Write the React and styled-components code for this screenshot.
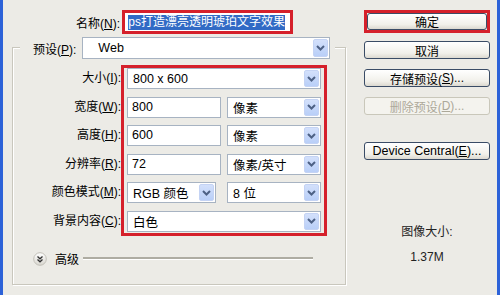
import styled, { createGlobalStyle } from "styled-components";

const GlobalStyle = createGlobalStyle`
  html, body {
    margin: 0;
    padding: 0;
  }
  body {
    width: 500px;
    height: 295px;
    overflow: hidden;
    font-family: "Liberation Sans", "Noto Sans CJK SC", sans-serif;
    font-size: 12px;
    color: #000;
  }
`;

const Window = styled.div`
  box-sizing: border-box;
  width: 500px;
  height: 295px;
  display: flex;
  padding-top: 10px;
  background: #ecebe6;
  border-left: 3px solid #2d62d8;
  border-right: 3px solid #2d62d8;
`;

const LeftPane = styled.div`
  width: 360px;
  display: flex;
  flex-direction: column;
`;

const RightPane = styled.div`
  width: 126px;
  margin-left: 1px;
  display: flex;
  flex-direction: column;
  align-items: stretch;
  gap: 10px;
`;

const Label = styled.div`
  width: ${(p) => p.$width || "auto"};
  height: ${(p) => p.$height || "auto"};
  line-height: ${(p) => p.$height || "normal"};
  text-align: ${(p) => p.$align || "left"};
  white-space: nowrap;
  flex-shrink: 0;
  u {
    text-decoration: underline;
  }
`;

const NameRow = styled.div`
  display: flex;
  align-items: center;
  height: 24px;
`;

const RedFrame = styled.div`
  box-sizing: border-box;
  border: 3px solid #d5202b;
  width: ${(p) => p.$width || "auto"};
  height: ${(p) => p.$height || "auto"};
  margin-left: ${(p) => p.$left || "0"};
  margin-bottom: ${(p) => p.$bottom || "0"};
  display: flex;
  align-items: stretch;
`;

const NameInput = styled.div`
  flex: 1;
  background: #fff;
  display: flex;
  justify-content: flex-end;
  align-items: center;
  overflow: hidden;
  padding-right: 5px;
`;

const Selected = styled.span`
  background: #316ac5;
  color: #fff;
  white-space: nowrap;
  line-height: 15px;
`;

const GroupBox = styled.div`
  box-sizing: border-box;
  margin: 13px 0 0 9px;
  width: 334px;
  height: 238px;
  border: 1px solid #c9c7bd;
  box-shadow: inset 1px 1px 0 #fff, 1px 1px 0 #fff;
  display: flex;
  flex-direction: column;
`;

const PresetRow = styled.div`
  display: flex;
  align-items: center;
  gap: 6px;
  margin: -11px 0 0 7px;
  width: 315px;
  height: 22px;
  padding: 0 4px 0 13px;
  box-sizing: border-box;
  background: #ecebe6;
`;

const Fields = styled.div`
  display: flex;
  margin-top: 6px;
`;

const LabelCol = styled.div`
  width: 108px;
  padding-top: 3px;
  display: flex;
  flex-direction: column;
  gap: 7.6px;
`;

const ControlCol = styled.div`
  box-sizing: border-box;
  width: 206px;
  border: 3px solid #d5202b;
  padding: 0 3px 1px;
  display: flex;
  flex-direction: column;
  gap: 7.6px;
`;

const ControlRow = styled.div`
  display: flex;
  gap: ${(p) => p.$gap || "6px"};
`;

const Input = styled.div`
  box-sizing: border-box;
  width: ${(p) => p.$width || "94px"};
  height: 21px;
  border: 1px solid #a7b3c2;
  background: #fff;
  padding-left: 4px;
  line-height: 19px;
  font-size: 12.5px;
  white-space: nowrap;
`;

const SelectBox = styled.div`
  box-sizing: border-box;
  width: ${(p) => p.$width || "94px"};
  height: ${(p) => p.$height || "21px"};
  border: 1px solid #a7b3c2;
  background: #fff;
  display: flex;
  align-items: stretch;
  padding: 1px;
  font-size: 12.5px;
`;

const SelectText = styled.div`
  flex: 1;
  padding-left: ${(p) => p.$pad || "4px"};
  display: flex;
  align-items: center;
  white-space: nowrap;
  overflow: hidden;
`;

const ArrowButton = styled.div`
  width: 15px;
  border-radius: 2px;
  background: linear-gradient(#d3e0fb, #b9cff8);
  border: 1px solid #c4d3f4;
  box-sizing: border-box;
  display: flex;
  align-items: center;
  justify-content: center;
`;

const AdvancedRow = styled.div`
  display: flex;
  align-items: center;
  width: 300px;
  height: 16px;
  margin: 15px 0 0 20px;
  gap: 8px;
`;

const AdvancedLine = styled.span`
  display: block;
  flex: 0 0 230px;
  margin-left: -4px;
  height: 3px;
  background: linear-gradient(#aeaca2 66%, #ffffff 66%);
`;

const Button = styled.div`
  box-sizing: border-box;
  height: ${(p) => p.$height || "18px"};
  width: 100%;
  margin-top: ${(p) => p.$top || "0"};
  border: 1px solid ${(p) => (p.$disabled ? "#c9c7ba" : "#3a4c66")};
  border-radius: 3px;
  background: ${(p) =>
    p.$disabled ? "#f4f3ee" : "linear-gradient(#ffffff, #f1f0ea 70%, #dcd9d0)"};
  color: ${(p) => (p.$disabled ? "#aca899" : "#000")};
  display: flex;
  align-items: center;
  justify-content: center;
  white-space: nowrap;
  font-size: ${(p) => p.$size || "12px"};
`;

const InfoText = styled.div`
  text-align: center;
  line-height: 16px;
  margin-top: ${(p) => p.$top || "0"};
  color: #222;
`;

function Chevron() {
  return (
    <svg width="9" height="6" viewBox="0 0 9 6">
      <polyline points="1,1 4.5,4.5 8,1" fill="none" stroke="#4d6185" strokeWidth="2" />
    </svg>
  );
}

function Select({ value, width, height, pad }) {
  return (
    <SelectBox $width={width} $height={height}>
      <SelectText $pad={pad}>{value}</SelectText>
      <ArrowButton>
        <Chevron />
      </ArrowButton>
    </SelectBox>
  );
}

function AdvancedIcon() {
  return (
    <svg width="14" height="14" viewBox="0 0 14 14">
      <defs>
        <linearGradient id="adv" x1="0" y1="0" x2="0" y2="1">
          <stop offset="0" stopColor="#ffffff" />
          <stop offset="1" stopColor="#d8d6cf" />
        </linearGradient>
      </defs>
      <circle cx="7" cy="7" r="6.3" fill="url(#adv)" stroke="#c2c0b8" />
      <polyline points="4.5,4.5 7,6.8 9.5,4.5" fill="none" stroke="#333" strokeWidth="1.3" />
      <polyline points="4.5,7.5 7,9.8 9.5,7.5" fill="none" stroke="#333" strokeWidth="1.3" />
    </svg>
  );
}

const fieldLabels = [
  ["大小(", "I", "):"],
  ["宽度(", "W", "):"],
  ["高度(", "H", "):"],
  ["分辨率(", "R", "):"],
  ["颜色模式(", "M", "):"],
  ["背景内容(", "C", "):"],
];

export default function App() {
  return (
    <>
      <GlobalStyle />
      <Window>
        <LeftPane>
          <NameRow>
            <Label $width="117px" $align="right">
              名称(<u>N</u>):
            </Label>
            <RedFrame $width="171px" $height="24px" $left="2px">
              <NameInput>
                <Selected>ps打造漂亮透明琥珀文字效果</Selected>
              </NameInput>
            </RedFrame>
          </NameRow>
          <GroupBox>
            <PresetRow>
              <Label>
                预设(<u>P</u>):
              </Label>
              <Select value="Web" width="248px" height="22px" pad="14px" />
            </PresetRow>
            <Fields>
              <LabelCol>
                {fieldLabels.map(([a, k, b]) => (
                  <Label key={k} $height="21px" $align="right">
                    {a}
                    <u>{k}</u>
                    {b}
                  </Label>
                ))}
              </LabelCol>
              <ControlCol>
                <ControlRow>
                  <Select value="800 x 600" width="194px" />
                </ControlRow>
                <ControlRow>
                  <Input>800</Input>
                  <Select value="像素" />
                </ControlRow>
                <ControlRow>
                  <Input>600</Input>
                  <Select value="像素" />
                </ControlRow>
                <ControlRow>
                  <Input>72</Input>
                  <Select value="像素/英寸" />
                </ControlRow>
                <ControlRow $gap="11px">
                  <Select value="RGB 颜色" width="89px" />
                  <Select value="8 位" />
                </ControlRow>
                <ControlRow>
                  <Select value="白色" width="194px" />
                </ControlRow>
              </ControlCol>
            </Fields>
            <AdvancedRow>
              <AdvancedIcon />
              <Label>高级</Label>
              <AdvancedLine />
            </AdvancedRow>
          </GroupBox>
        </LeftPane>
        <RightPane>
          <RedFrame $height="23px" $bottom="-2px">
            <Button $height="17px">确定</Button>
          </RedFrame>
          <Button>取消</Button>
          <Button>
            存储预设(<u>S</u>)...
          </Button>
          <Button $disabled>
            删除预设(<u>D</u>)...
          </Button>
          <Button $top="17px" $size="12.5px">
            Device Central(<u>E</u>)...
          </Button>
          <InfoText $top="54px">图像大小:</InfoText>
          <InfoText $top="-1px">1.37M</InfoText>
        </RightPane>
      </Window>
    </>
  );
}
